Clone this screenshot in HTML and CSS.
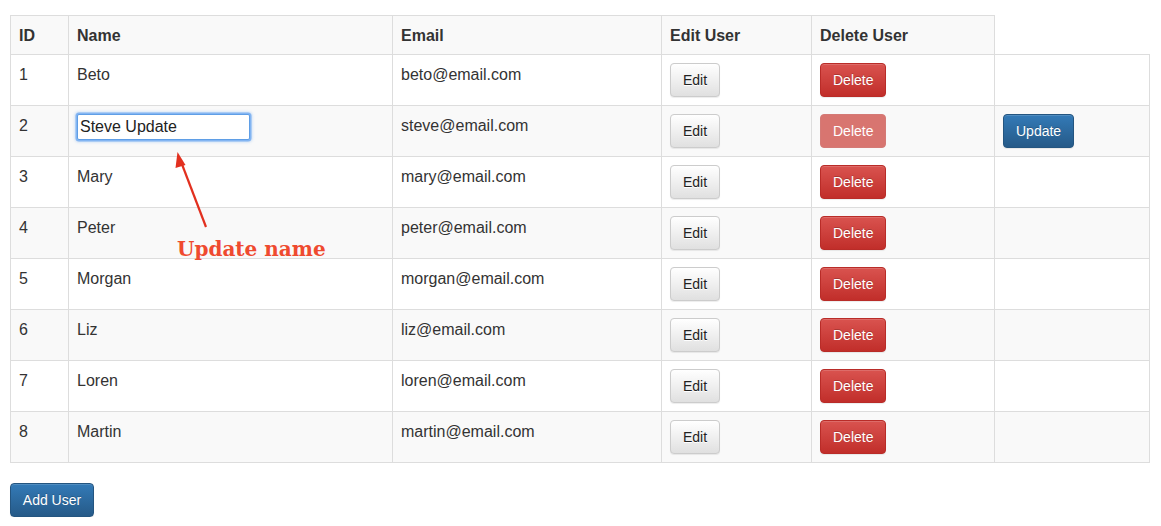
FILE: index.html
```html
<!DOCTYPE html>
<html>
<head>
<meta charset="utf-8">
<title>Users</title>
<link rel="stylesheet" href="styles.css">
</head>
<body>
<div class="page">
  <table class="users">
    <colgroup>
      <col class="c-id"><col class="c-name"><col class="c-email"><col class="c-edit"><col class="c-del"><col class="c-extra">
    </colgroup>
    <tbody>
      <tr><th>ID</th><th>Name</th><th>Email</th><th>Edit User</th><th>Delete User</th></tr>
      <tr><td>1</td><td>Beto</td><td>beto@email.com</td><td><button class="btn btn-default">Edit</button></td><td><button class="btn btn-danger">Delete</button></td><td></td></tr>
      <tr><td>2</td><td><input class="name-input" type="text" value="Steve Update"></td><td>steve@email.com</td><td><button class="btn btn-default">Edit</button></td><td><button class="btn btn-danger disabled">Delete</button></td><td><button class="btn btn-primary">Update</button></td></tr>
      <tr><td>3</td><td>Mary</td><td>mary@email.com</td><td><button class="btn btn-default">Edit</button></td><td><button class="btn btn-danger">Delete</button></td><td></td></tr>
      <tr><td>4</td><td>Peter</td><td>peter@email.com</td><td><button class="btn btn-default">Edit</button></td><td><button class="btn btn-danger">Delete</button></td><td></td></tr>
      <tr><td>5</td><td>Morgan</td><td>morgan@email.com</td><td><button class="btn btn-default">Edit</button></td><td><button class="btn btn-danger">Delete</button></td><td></td></tr>
      <tr><td>6</td><td>Liz</td><td>liz@email.com</td><td><button class="btn btn-default">Edit</button></td><td><button class="btn btn-danger">Delete</button></td><td></td></tr>
      <tr><td>7</td><td>Loren</td><td>loren@email.com</td><td><button class="btn btn-default">Edit</button></td><td><button class="btn btn-danger">Delete</button></td><td></td></tr>
      <tr><td>8</td><td>Martin</td><td>martin@email.com</td><td><button class="btn btn-default">Edit</button></td><td><button class="btn btn-danger">Delete</button></td><td></td></tr>
    </tbody>
  </table>
  <button class="btn btn-primary add">Add User</button>

  <svg class="arrow" width="50" height="90" viewBox="0 0 50 90">
    <line x1="38" y1="84" x2="13.5" y2="20" stroke="#e2301f" stroke-width="2.2"/>
    <polygon points="9.5,9 17.5,22 7.5,25" fill="#e2301f"/>
  </svg>
  <div class="note">Update name</div>
</div>
</body>
</html>
```
FILE: styles.css
```css
html, body {
  margin: 0;
  padding: 0;
  background: #fff;
}
body {
  font-family: "Liberation Sans", Arial, Helvetica, sans-serif;
  color: #333;
  font-size: 16px;
  line-height: 24px;
}
.page {
  position: relative;
  padding: 15px 10px 0 10px;
}
.users {
  border-collapse: collapse;
  border-spacing: 0;
  table-layout: fixed;
  width: 1139px;
  margin-bottom: 20px;
}
.c-id { width: 58px; }
.c-name { width: 324px; }
.c-email { width: 269px; }
.c-edit { width: 150px; }
.c-del { width: 183px; }
.c-extra { width: 155px; }
.users th,
.users td {
  border: 1px solid #ddd;
  padding: 8px;
  text-align: left;
  vertical-align: top;
  line-height: 24px;
}
.users th {
  font-weight: bold;
  padding: 8px 8px 6px 8px;
}
.users tr:nth-child(odd) > th,
.users tr:nth-child(odd) > td {
  background: #f9f9f9;
}
.btn {
  display: inline-block;
  box-sizing: border-box;
  height: 34px;
  margin: 0;
  padding: 6px 12px;
  font-family: "Liberation Sans", Arial, Helvetica, sans-serif;
  font-size: 14px;
  line-height: 20px;
  border: 1px solid transparent;
  border-radius: 4px;
  cursor: pointer;
  vertical-align: top;
}
.btn-default {
  color: #222;
  background-image: linear-gradient(to bottom, #fff 0, #e0e0e0 100%);
  border-color: #ccc;
  text-shadow: 0 1px 0 #fff;
  box-shadow: inset 0 1px 0 rgba(255,255,255,.15), 0 1px 1px rgba(0,0,0,.075);
}
.btn-danger {
  color: #fff;
  background-image: linear-gradient(to bottom, #d9534f 0, #c12e2a 100%);
  border-color: #b92c28;
  text-shadow: 0 -1px 0 rgba(0,0,0,.2);
  box-shadow: inset 0 1px 0 rgba(255,255,255,.15), 0 1px 1px rgba(0,0,0,.075);
}
.btn-danger.disabled {
  background-image: none;
  background-color: #d87570;
  border-color: #d47a76;
  box-shadow: none;
  text-shadow: none;
}
.btn-primary {
  color: #fff;
  background-image: linear-gradient(to bottom, #337ab7 0, #265a88 100%);
  border-color: #245580;
  text-shadow: 0 -1px 0 rgba(0,0,0,.2);
  box-shadow: inset 0 1px 0 rgba(255,255,255,.15), 0 1px 1px rgba(0,0,0,.075);
}
.add {
  width: 84px;
  padding: 6px 0;
  text-align: center;
}
.name-input {
  box-sizing: border-box;
  width: 173px;
  height: 26px;
  margin: 0;
  padding: 0 2px;
  font-family: "Liberation Sans", Arial, Helvetica, sans-serif;
  font-size: 16px;
  color: #222;
  background: #fff;
  border: 1px solid #5f9ee6;
  border-radius: 2px;
  outline: none;
  box-shadow: 0 0 0 1.5px rgba(110,168,240,.75), 0 0 3px 2px rgba(110,168,240,.45);
  vertical-align: top;
}
.arrow {
  position: absolute;
  left: 168px;
  top: 143px;
}
.note {
  position: absolute;
  left: 177px;
  top: 235px;
  font-family: "DejaVu Serif", "Liberation Serif", serif;
  font-weight: bold;
  font-size: 20px;
  line-height: 28px;
  color: #ef4a2f;
  white-space: nowrap;
}
```
